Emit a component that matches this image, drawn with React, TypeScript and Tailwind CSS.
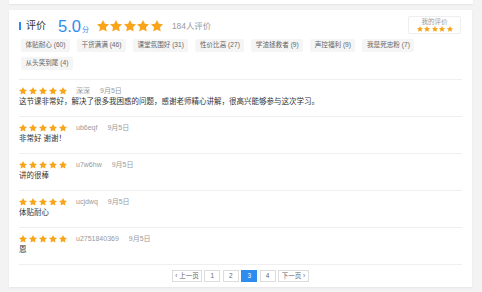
import React from "react";

type Review = {
  user: string;
  date: string;
  text: string;
};

const tags = [
  "体贴耐心 (60)",
  "干货满满 (46)",
  "课堂氛围好 (31)",
  "性价比高 (27)",
  "学渣拯救者 (9)",
  "声控福利 (9)",
  "我是死忠粉 (7)",
  "从头笑到尾 (4)",
];

const reviews: Review[] = [
  {
    user: "深深",
    date: "9月5日",
    text: "这节课非常好，解决了很多我困惑的问题，感谢老师精心讲解，很高兴能够参与这次学习。",
  },
  { user: "ub6eqf", date: "9月5日", text: "非常好 谢谢！" },
  { user: "u7w6hw", date: "9月5日", text: "讲的很棒" },
  { user: "ucjdwq", date: "9月5日", text: "体贴耐心" },
  { user: "u2751840369", date: "9月5日", text: "恩" },
];

const Star = ({ size }: { size: number }) => (
  <svg width={size} height={size} viewBox="2 2 20 20" className="block">
    <polygon
      fill="#f8a51b"
      points="12,2 15.09,8.26 22,9.27 17,14.14 18.18,21.02 12,17.77 5.82,21.02 7,14.14 2,9.27 8.91,8.26"
    />
  </svg>
);

const Stars = ({ size, gap }: { size: number; gap: string }) => (
  <div className={`flex items-center ${gap}`}>
    {[0, 1, 2, 3, 4].map((i) => (
      <Star key={i} size={size} />
    ))}
  </div>
);

const ReviewItem = ({ review }: { review: Review }) => (
  <div className="border-t border-[#efefef] pt-[5px] pb-[9px]">
    <div className="flex h-[11px] items-center">
      <Stars size={8} gap="gap-[2px]" />
      <span className="ml-[9px] text-[7px] leading-none text-[#999]">{review.user}</span>
      <span className="ml-[10px] text-[7px] leading-none text-[#999]">{review.date}</span>
    </div>
    <div className="h-[11px] text-[7.5px] leading-[11px] text-[#333]">{review.text}</div>
  </div>
);

export default function App() {
  return (
    <div className="h-[292px] overflow-hidden bg-[#f3f3f3] font-['Liberation_Sans','Noto_Sans_CJK_SC',sans-serif]">
      <div className="ml-[9px] h-[4px] w-[464px] bg-white shadow-[0_1px_2px_rgba(0,0,0,0.06)]" />
      <div className="ml-[9px] mt-[6px] h-[277px] w-[463px] bg-white px-[10px] shadow-[0_1px_2px_rgba(0,0,0,0.06)]">
        <div className="flex items-start justify-between pt-[6px]">
          <div className="flex h-[20px] items-center">
            <div className="h-[8px] w-[2px] bg-[#2d8cf0]" />
            <span className="ml-[5px] text-[10px] leading-none text-[#333]">评价</span>
            <span className="ml-[12px] flex items-baseline text-[#2d8cf0]">
              <span className="text-[16.5px] leading-none">5.0</span>
              <span className="ml-[1px] text-[7px] leading-none">分</span>
            </span>
            <div className="ml-[8px]">
              <Stars size={12} gap="gap-[1.5px]" />
            </div>
            <span className="ml-[9px] text-[8.4px] leading-none text-[#999]">184人评价</span>
          </div>
          <div className="mr-[1px] flex h-[18px] w-[53px] flex-col items-center justify-center rounded-[2px] border border-[#eee]">
            <span className="text-[6.5px] leading-[8px] text-[#999]">我的评价</span>
            <Stars size={6} gap="gap-[1.5px]" />
          </div>
        </div>

        <div className="mt-[3px] flex flex-wrap gap-x-[7px] gap-y-[5px] pl-[2px]">
          {tags.map((t) => (
            <span
              key={t}
              className="flex h-[13px] items-center rounded-[2px] bg-[#f5f5f5] px-[4.5px] text-[6.6px] leading-none whitespace-nowrap text-[#666]"
            >
              {t}
            </span>
          ))}
        </div>

        <div className="mt-[9px]">
          {reviews.map((r) => (
            <ReviewItem key={r.user} review={r} />
          ))}
        </div>

        <div className="flex justify-center gap-[2.4px] border-t border-[#efefef] pt-[5px]">
          <span className="flex h-[12px] w-[30px] items-center justify-center border border-[#ddd] text-[6.5px] leading-none text-[#666]">
            ‹ 上一页
          </span>
          {[1, 2, 3, 4].map((n) => (
            <span
              key={n}
              className={
                n === 3
                  ? "flex h-[12px] w-[16px] items-center justify-center border border-[#2d8cf0] bg-[#2d8cf0] text-[6.5px] leading-none text-white"
                  : "flex h-[12px] w-[16px] items-center justify-center border border-[#ddd] text-[6.5px] leading-none text-[#666]"
              }
            >
              {n}
            </span>
          ))}
          <span className="flex h-[12px] w-[31px] items-center justify-center border border-[#ddd] text-[6.5px] leading-none text-[#666]">
            下一页 ›
          </span>
        </div>
      </div>
    </div>
  );
}
